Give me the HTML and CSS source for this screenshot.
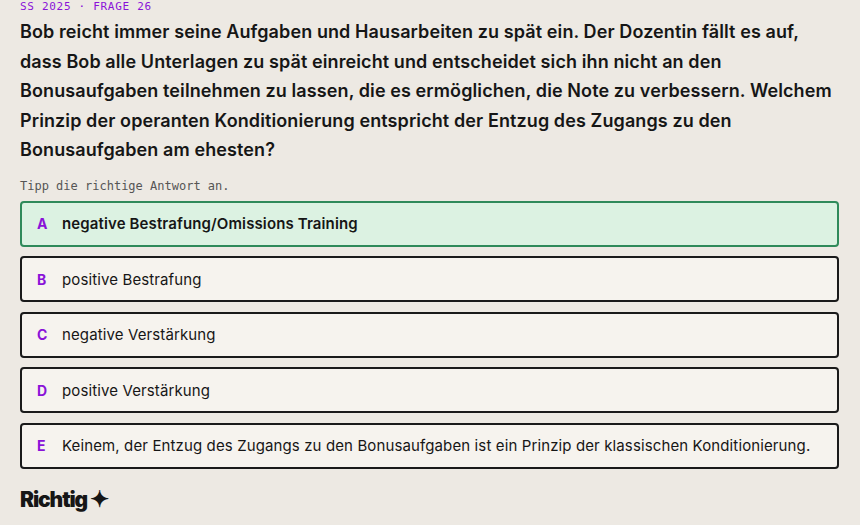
FILE: index.html
```html
<!DOCTYPE html>
<html lang="de">
<head>
<meta charset="utf-8">
<link rel="stylesheet" href="styles.css">
</head>
<body>
<main class="quiz">
  <div class="meta">SS 2025 · FRAGE 26</div>
  <h1 class="question">Bob reicht immer seine Aufgaben und Hausarbeiten zu spät ein. Der Dozentin fällt es auf, dass Bob alle Unterlagen zu spät einreicht und entscheidet sich ihn nicht an den Bonusaufgaben teilnehmen zu lassen, die es ermöglichen, die Note zu verbessern. Welchem Prinzip der operanten Konditionierung entspricht der Entzug des Zugangs zu den Bonusaufgaben am ehesten?</h1>
  <div class="hint">Tipp die richtige Antwort an.</div>
  <ul class="options">
    <li class="option correct"><span class="letter">A</span><span class="text">negative Bestrafung/Omissions Training</span></li>
    <li class="option"><span class="letter">B</span><span class="text">positive Bestrafung</span></li>
    <li class="option"><span class="letter">C</span><span class="text">negative Verstärkung</span></li>
    <li class="option"><span class="letter">D</span><span class="text">positive Verstärkung</span></li>
    <li class="option"><span class="letter">E</span><span class="text">Keinem, der Entzug des Zugangs zu den Bonusaufgaben ist ein Prinzip der klassischen Konditionierung.</span></li>
  </ul>
  <div class="result">Richtig <span class="star">✦</span></div>
</main>
</body>
</html>
```
FILE: styles.css
```css
html, body {
  margin: 0;
  padding: 0;
  background: #ede9e3;
}
body {
  font-family: Inter, "Noto Sans", sans-serif;
  color: #161616;
}
.quiz {
  padding: 0 21px 0 20px;
}
.meta {
  font-family: "DejaVu Sans Mono", "Liberation Mono", monospace;
  font-size: 11px;
  line-height: 13px;
  letter-spacing: 0.7px;
  color: #8a12d8;
  font-weight: 500;
}
.question {
  margin: 4px 0 0 0;
  font-size: 18px;
  font-weight: 600;
  line-height: 29.5px;
  letter-spacing: 0.1px;
}
.hint {
  font-family: "DejaVu Sans Mono", "Liberation Mono", monospace;
  font-size: 12px;
  line-height: 13px;
  color: #555;
  margin-top: 15px;
}
.options {
  list-style: none;
  margin: 8px 0 0 0;
  padding: 0;
  display: flex;
  flex-direction: column;
  gap: 9.5px;
}
.option {
  display: flex;
  align-items: center;
  height: 46px;
  box-sizing: border-box;
  border: 2px solid #1a1a1a;
  border-radius: 4px;
  background: #f6f3ee;
  padding: 0 15px;
  font-size: 15px;
  letter-spacing: 0.12px;
}
.option .letter {
  width: 25px;
  color: #8a12d8;
  font-weight: 700;
  font-size: 14px;
}
.option.correct {
  background: #dcf2e2;
  border-color: #2f8a5a;
}
.option.correct .text {
  font-weight: 600;
}
.result {
  margin-top: 17px;
  font-family: Inter, sans-serif;
  font-weight: 900;
  font-size: 21px;
  letter-spacing: -1.1px;
  line-height: 26px;
}
.star {
  font-size: 23px;
  letter-spacing: 0;
}
```
